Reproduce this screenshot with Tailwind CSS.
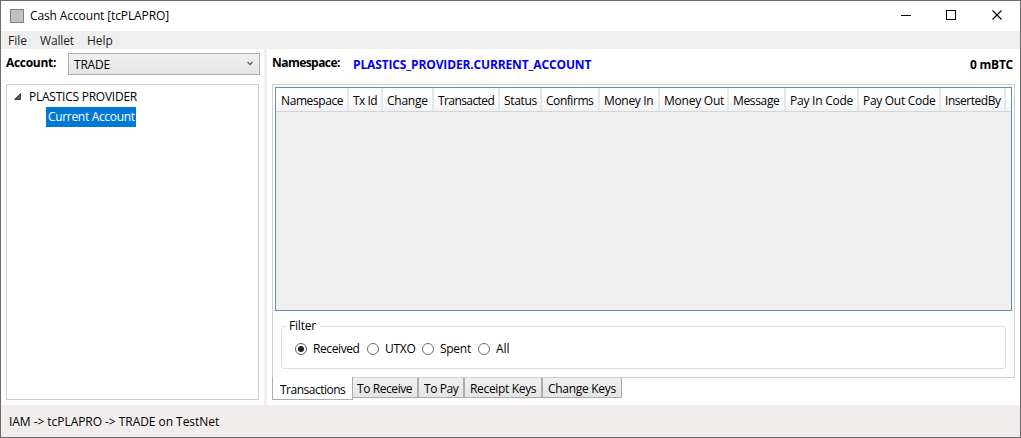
<!DOCTYPE html>
<html lang="en">
<head>
<meta charset="utf-8">
<title>Cash Account [tcPLAPRO]</title>
<script src="https://cdn.jsdelivr.net/npm/@tailwindcss/browser@4"></script>
</head>
<body class="h-[438px] w-[1021px] overflow-hidden whitespace-nowrap bg-white font-['Open_Sans',sans-serif] text-[12px] leading-4 text-black">
<div class="flex h-full w-full flex-col border border-[#6b6b6b]">
  <header class="flex h-[30px] shrink-0 items-center">
    <div class="ml-[9px] size-[14px] border border-[#808080] bg-[#c0c0c0]"></div>
    <h1 class="ml-[6px] tracking-[-0.12px]">Cash Account [tcPLAPRO]</h1>
    <svg class="-mt-[2px] ml-auto mr-[17px] h-[10px] w-[102px]" viewBox="0 0 102 10" fill="none" stroke="#000" shape-rendering="crispEdges">
      <path d="M0 5.5H10"/><path d="M45.5 .5h9v9h-9z"/><path d="M91.5 .5l9 9M100.500 .5l-9 9" shape-rendering="auto" stroke-width="1.1"/>
    </svg>
  </header>
  <nav class="flex h-[18px] shrink-0 items-center bg-[#efefef] pl-[7px] pt-[2px] text-[#212121]">
    <span class="w-8">File</span><span class="w-[47px] tracking-[-0.14px]">Wallet</span><span>Help</span>
  </nav>
  <main class="flex h-[356px] shrink-0">
    <aside class="w-[263px] shrink-0 pl-[5px] pt-1">
      <div class="flex h-[22px]">
        <div class="w-[62px] pt-[2px] font-bold tracking-[-0.3px]">Account:</div>
        <div class="flex w-[192px] items-center border border-[#acacac] bg-linear-to-b from-[#f0f0f0] to-[#e5e5e5] pl-[5px] pt-px tracking-[-0.2px]">TRADE
          <svg class="ml-auto mr-[6px] -mt-[2px] h-[5px] w-[6px]" viewBox="0 0 6 5" fill="none" stroke="#606060" stroke-width="1.3"><path d="M.5 1L3 3.500L5.500 1"/></svg>
        </div>
      </div>
      <div class="mt-[9px] h-[316px] w-[253px] border border-[#cfcfcf] pt-px">
        <div class="flex h-[21px] items-center">
          <svg class="-mt-px ml-[7px] size-[7px]" viewBox="0 0 7 7"><path d="M6.500 .5v6h-6z" fill="#595959" stroke="#262626" stroke-width=".8"/></svg>
          <span class="ml-2 tracking-[-0.24px]">PLASTICS PROVIDER</span>
        </div>
        <div class="ml-[39px] h-5 w-[90px] bg-[#0078d7] pl-[2px] pt-[2px] tracking-[-0.32px] text-white">Current Account</div>
      </div>
    </aside>
    <div class="w-[3px] shrink-0 bg-[#efefef]"></div>
    <section class="w-[752px] shrink-0 pl-[5px] pt-[6px]">
      <div class="flex h-[29px] pr-[6px] font-bold">
        <span class="w-[81px] tracking-[-0.55px]">Namespace:</span>
        <span class="pt-[2px] text-[#0000ee] tracking-[-0.14px]">PLASTICS_PROVIDER.CURRENT_ACCOUNT</span>
        <span class="ml-auto pt-[2px] tracking-[-0.25px]">0 mBTC</span>
      </div>
      <div class="h-[294px] w-[743px] border border-[#cfcfcf] p-[2px]">
        <div class="h-[224px] w-[737px] border border-[#688caf] bg-[#efefef]">
          <div class="flex h-6 border-b border-[#d5d5d5] bg-linear-to-b from-white from-40% to-[#f1f2f4] pt-[5px] *:-mt-[5px] *:h-[23px] *:shrink-0 *:border-r-2 *:border-[#e6e7e8] *:pl-[4px] *:pt-[5px]">
            <div class="w-[73px] indent-px tracking-[-0.4px]">Namespace</div>
            <div class="w-[34px] tracking-[-0.5px]">Tx Id</div>
            <div class="w-[51px] tracking-[-0.25px]">Change</div>
            <div class="w-[66px] tracking-[-0.58px]">Transacted</div>
            <div class="w-[42px] tracking-[-0.35px]">Status</div>
            <div class="w-[58px] tracking-[-0.45px]">Confirms</div>
            <div class="w-[60px] tracking-[-0.33px]">Money In</div>
            <div class="w-[69px] tracking-[-0.24px]">Money Out</div>
            <div class="w-[57px] tracking-[-0.35px]">Message</div>
            <div class="w-[73px] tracking-[-0.24px]">Pay In Code</div>
            <div class="w-[82px] tracking-[-0.3px]">Pay Out Code</div>
            <div class="w-[65px] tracking-[-0.47px]">InsertedBy</div>
          </div>
        </div>
        <fieldset class="ml-[6px] mt-[7px] h-[51px] w-[725px] rounded-[3px] border border-[#d5dfe5] pl-[13px]">
          <legend class="-ml-[9px] pl-[3px] pr-[4px] tracking-[-0.2px]">Filter</legend>
          <div class="flex pt-[7px]">
            <label class="flex w-[72px] items-center"><span class="-mt-px mr-[6px] flex size-3 items-center justify-center rounded-full border border-[#606060]"><span class="size-[6px] rounded-full bg-[#212121]"></span></span><span class="tracking-[-0.4px]">Received</span></label>
            <label class="flex w-[55px] items-center"><span class="-mt-px mr-[6px] size-3 rounded-full border border-[#707070]"></span><span class="tracking-[-0.25px]">UTXO</span></label>
            <label class="flex w-[56px] items-center"><span class="-mt-px mr-[6px] size-3 rounded-full border border-[#707070]"></span><span class="tracking-[-0.28px]">Spent</span></label>
            <label class="flex items-center"><span class="-mt-px mr-[6px] size-3 rounded-full border border-[#707070]"></span><span>All</span></label>
          </div>
        </fieldset>
      </div>
      <div class="flex h-[23px] items-start">
        <div class="relative -mt-px h-[23px] w-[81px] border border-t-0 border-[#acacac] bg-white pl-[7px] pt-[5px] tracking-[-0.5px]">Transactions</div>
        <div class="flex *:h-5 *:border-b *:border-[#acacac] *:bg-linear-to-b *:from-[#f0f0f0] *:to-[#e5e5e5] *:pt-[3px]">
          <div class="w-[66px] border-r-2 pl-1 tracking-[-0.42px]">To Receive</div>
          <div class="w-[46px] border-r-2 pl-[5px] tracking-[-0.4px]">To Pay</div>
          <div class="w-[78px] border-r-2 pl-[5px] tracking-[-0.33px]">Receipt Keys</div>
          <div class="w-[79px] border-r pl-[5px] tracking-[-0.3px]">Change Keys</div>
        </div>
      </div>
    </section>
  </main>
  <footer class="grow bg-[#f0edec] pl-[8px] pt-[9px] tracking-[-0.05px]">IAM -&gt; tcPLAPRO -&gt; TRADE on TestNet</footer>
</div>
</body>
</html>
